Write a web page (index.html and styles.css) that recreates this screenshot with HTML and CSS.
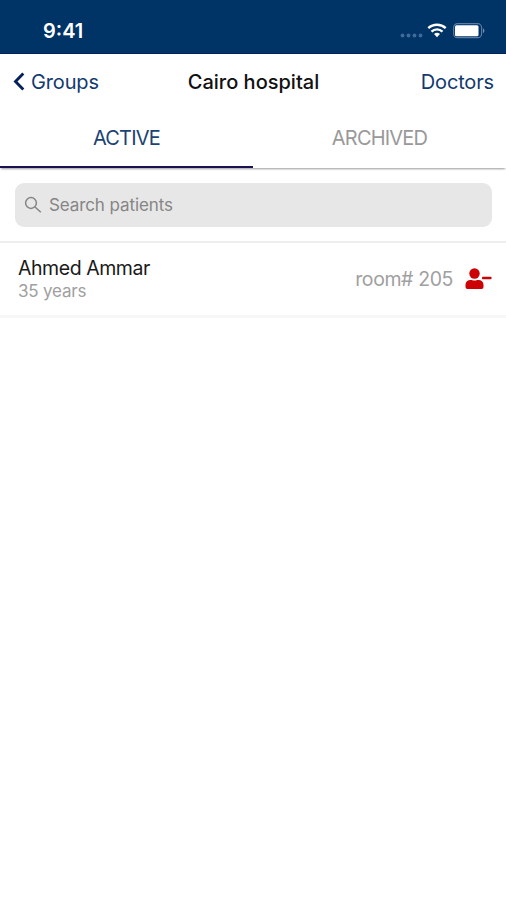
FILE: index.html
```html
<!DOCTYPE html>
<html lang="en">
<head>
<meta charset="UTF-8">
<meta name="viewport" content="width=device-width, initial-scale=1">
<title>Cairo hospital</title>
<link rel="stylesheet" href="styles.css">
</head>
<body>
<div class="status">
  <span class="time">9:41</span>
  <svg class="status-icons" width="88" height="20" viewBox="0 0 88 20">
    <g fill="#41699a">
      <circle cx="3.500" cy="14.500" r="1.900"/>
      <circle cx="9.500" cy="14.500" r="1.900"/>
      <circle cx="15.500" cy="14.500" r="1.900"/>
      <circle cx="21.500" cy="14.500" r="1.900"/>
    </g>
    <g fill="none" stroke="#fff" stroke-width="2.400">
      <path d="M29.300 7.200a12.700 12.700 0 0 1 17.400 0"/>
      <path d="M32.500 10.600a8 8 0 0 1 11 0"/>
    </g>
    <path d="M38 16.200l-3-3.100a4.300 4.300 0 0 1 6 0z" fill="#fff"/>
    <rect x="54.600" y="2.700" width="28" height="14" rx="4" fill="none" stroke="#5b7da3" stroke-width="1.200"/>
    <rect x="56" y="4.200" width="23.500" height="11" rx="1.500" fill="#fff"/>
    <path d="M84 7.300q3 2.400 0 5z" fill="#6f8db0"/>
  </svg>
</div>

<div class="nav">
  <a class="back">
    <svg width="12" height="20" viewBox="0 0 12 20"><path d="M10.300 1.500L2.500 9.500l7.800 8" fill="none" stroke="#06205c" stroke-width="2.900"/></svg>
    <span>Groups</span>
  </a>
  <h1>Cairo hospital</h1>
  <a class="doctors">Doctors</a>
</div>

<div class="tabs">
  <div class="tab active"><span>ACTIVE</span></div>
  <div class="tab"><span>ARCHIVED</span></div>
</div>

<div class="search">
  <div class="search-box">
    <svg width="18" height="18" viewBox="0 0 18 18"><g fill="none" stroke="#858585" stroke-width="1.500"><circle cx="7" cy="7" r="5.400"/><path d="M11 11l5.800 5.300"/></g></svg>
    <span>Search patients</span>
  </div>
</div>

<div class="patient">
  <div class="info">
    <div class="name">Ahmed Ammar</div>
    <div class="age">35 years</div>
  </div>
  <div class="room">room# 205</div>
  <svg width="27" height="22" viewBox="0 0 27 22" fill="#cc0204">
    <circle cx="9.500" cy="5.500" r="5.200"/>
    <path d="M.5 19v-2.200a5 5 0 0 1 5-4.900h1.200q2.800 1 5.600 0h1.200a5 5 0 0 1 5 4.900V19a2 2 0 0 1-2 2h-14a2 2 0 0 1-2-2z"/>
    <rect x="17" y="8.800" width="9.500" height="2.400" rx=".8"/>
  </svg>
</div>
</body>
</html>
```

FILE: styles.css
```css
* {
  box-sizing: border-box;
}
body {
  margin: 0;
  background: #fff;
  font-family: Inter, "Liberation Sans", sans-serif;
  font-size: 20px;
}
svg {
  display: block;
  flex: none;
}
.status {
  display: flex;
  justify-content: space-between;
  height: 54px;
  padding: 21px 19px 0 43px;
  background: #003366;
  border-bottom: 1px solid #03205c;
}
.time {
  color: #fff;
  font-size: 20px;
  font-weight: 600;
  line-height: 20px;
}
.nav {
  display: grid;
  grid-template-columns: 1fr auto 1fr;
  align-items: center;
  height: 55px;
  padding: 0 12px 0 13px;
  color: #123a6f;
  letter-spacing: -.15px;
}
.back {
  display: flex;
  align-items: center;
  gap: 6px;
}
.nav h1 {
  margin: 0;
  color: #111;
  font-size: 20px;
  font-weight: 500;
  letter-spacing: 0;
}
.doctors {
  text-align: right;
}
.tabs {
  display: flex;
  height: 59px;
  box-shadow: 0 2px 2px -1px #999;
}
.tab {
  flex: 1;
  padding-top: 17px;
  color: #999;
  line-height: 24px;
  text-align: center;
  letter-spacing: -.8px;
}
.tab.active {
  color: #1b4373;
  border-bottom: 2px solid #1d1250;
}
.search {
  height: 75px;
  padding: 15px 14px 0 15px;
  border-bottom: 2px solid #eee;
}
.search-box {
  display: flex;
  align-items: center;
  gap: 7px;
  height: 44px;
  padding-left: 9px;
  border-radius: 9px;
  background: #e7e7e7;
  color: #858585;
  font-size: 17px;
  letter-spacing: -.1px;
}
.patient {
  display: flex;
  align-items: center;
  height: 75px;
  padding: 0 14px 1px 18px;
  border-bottom: 3px solid #f7f7f7;
}
.info {
  flex: 1;
}
.name {
  color: #1a1a1a;
  font-size: 19.5px;
  line-height: 24px;
  letter-spacing: -.45px;
}
.age {
  color: #a0a0a0;
  font-size: 17px;
  line-height: 22px;
  letter-spacing: -.2px;
}
.room {
  margin-right: 12px;
  color: #a0a0a0;
  font-size: 19.5px;
  letter-spacing: -.4px;
}
```
